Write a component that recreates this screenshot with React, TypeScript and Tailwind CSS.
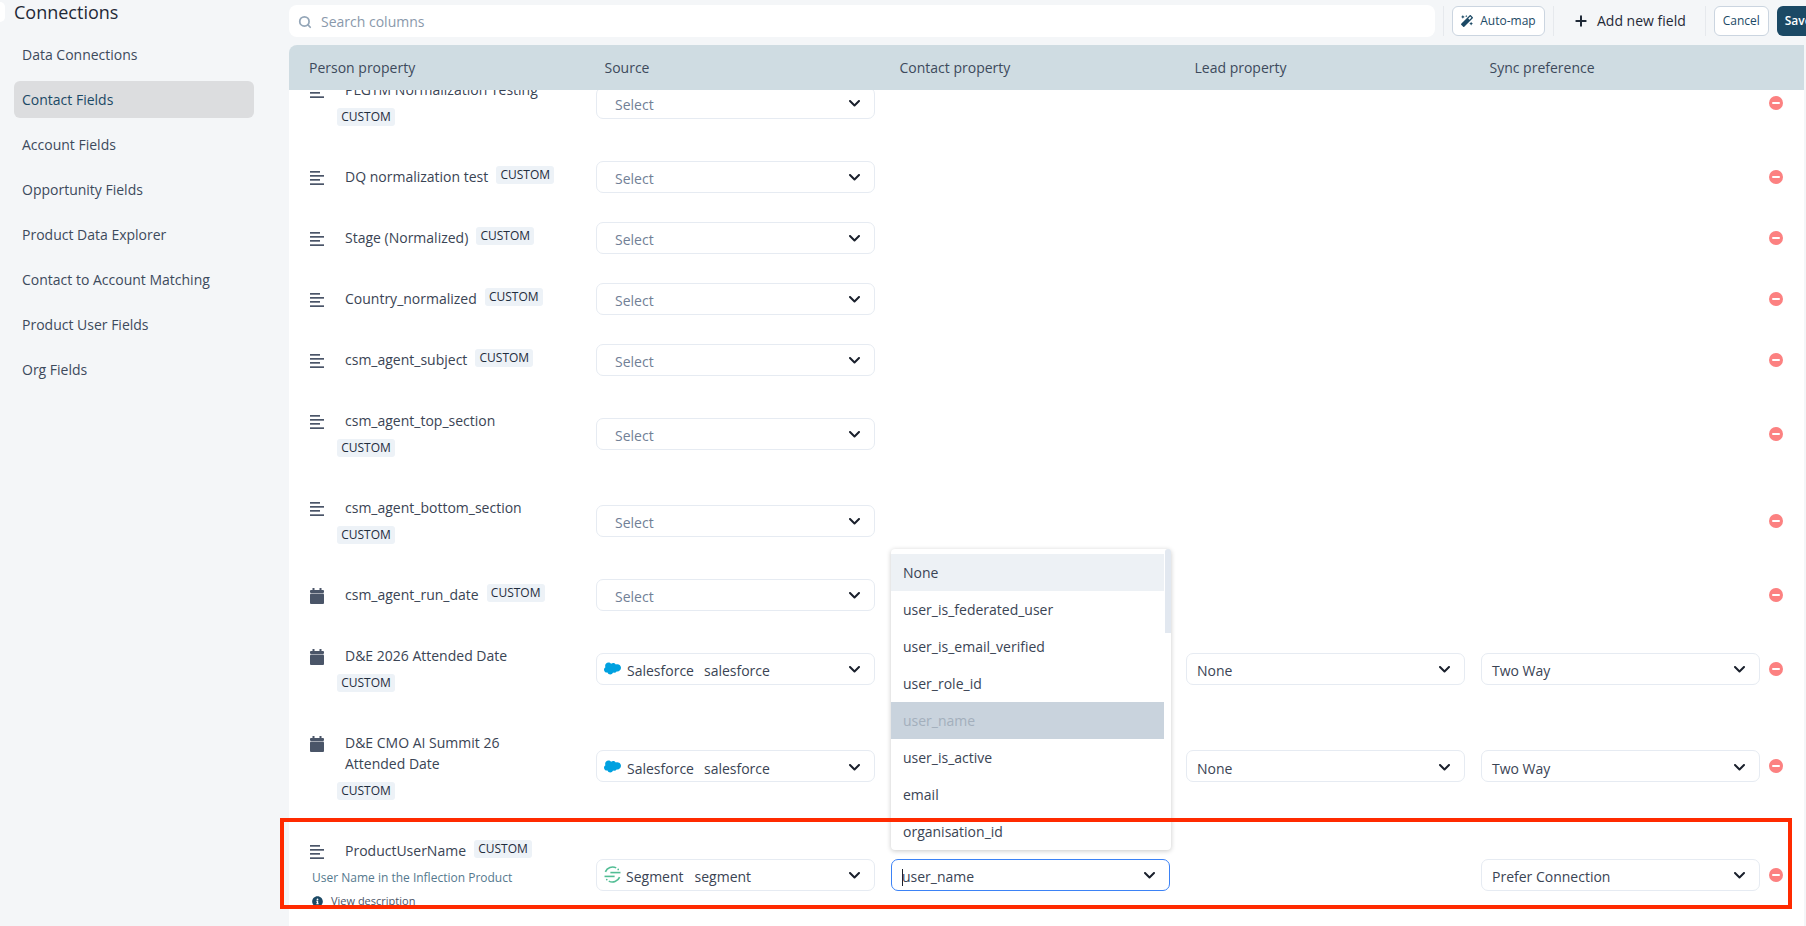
import React from 'react'
import { FaInfoCircle, FaMagic } from 'react-icons/fa'
import { SiSalesforce } from 'react-icons/si'
import { Plus, Search } from 'lucide-react'

type Row = {
  name: string
  icon: 'lines' | 'calendar'
  source: 'select' | 'salesforce' | 'segment'
  lead?: string
  sync?: string
  contact?: boolean
  extra?: boolean
}

const navItems = ['Data Connections', 'Contact Fields', 'Account Fields', 'Opportunity Fields', 'Product Data Explorer', 'Contact to Account Matching', 'Product User Fields', 'Org Fields']

const options = ['None', 'user_is_federated_user', 'user_is_email_verified', 'user_role_id', 'user_name', 'user_is_active', 'email', 'organisation_id']

const rows: Row[] = [
  { name: 'PLGTM Normalization Testing', icon: 'lines', source: 'select' },
  { name: 'DQ normalization test', icon: 'lines', source: 'select' },
  { name: 'Stage (Normalized)', icon: 'lines', source: 'select' },
  { name: 'Country_normalized', icon: 'lines', source: 'select' },
  { name: 'csm_agent_subject', icon: 'lines', source: 'select' },
  { name: 'csm_agent_top_section', icon: 'lines', source: 'select' },
  { name: 'csm_agent_bottom_section', icon: 'lines', source: 'select' },
  { name: 'csm_agent_run_date', icon: 'calendar', source: 'select' },
  { name: 'D&E 2026 Attended Date', icon: 'calendar', source: 'salesforce', lead: 'None', sync: 'Two Way' },
  { name: 'D&E CMO AI Summit 26 Attended Date', icon: 'calendar', source: 'salesforce', lead: 'None', sync: 'Two Way' },
  { name: 'ProductUserName', icon: 'lines', source: 'segment', sync: 'Prefer Connection', contact: true, extra: true },
]

const Chevron = () => (
  <svg width="11" height="7" viewBox="0 0 11 7" fill="none" className="shrink-0 mt-[2px]">
    <path d="M1 1l4.5 4.5L10 1" stroke="#1a202c" strokeWidth="2" strokeLinecap="round" strokeLinejoin="round" />
  </svg>
)

const LinesIcon = () => (
  <svg width="14" height="14" viewBox="0 0 14 14" className="shrink-0 mt-[5px] mr-[13px]" fill="#4a5568">
    <rect x="0" y="0" width="10" height="1.7" />
    <rect x="0" y="4" width="14" height="1.7" />
    <rect x="0" y="8" width="10" height="1.7" />
    <rect x="0" y="12.3" width="14" height="1.7" />
  </svg>
)

const CalendarIcon = () => (
  <svg width="14" height="16" viewBox="0 0 14 16" className="shrink-0 mt-[4px] mr-[13px]" fill="#4a5568">
    <rect x="2.5" y="0" width="2" height="3" />
    <rect x="9.5" y="0" width="2" height="3" />
    <rect x="0" y="2" width="14" height="3" rx="1" />
    <rect x="0" y="5.6" width="14" height="10.4" rx="1" />
  </svg>
)

const SegmentLogo = () => (
  <svg width="17" height="17" viewBox="0 0 16 16" fill="none" stroke="#52bd94" strokeWidth="1.5" className="shrink-0 mr-[5px]">
    <path d="M6 6.2h9.5" />
    <path d="M0.5 9.8H10" />
    <path d="M1.3 5.5A7.3 7.3 0 0 1 11.5 1.8" />
    <path d="M14.7 10.5A7.3 7.3 0 0 1 4.5 14.2" />
    <circle cx="13.4" cy="3.2" r="0.8" fill="#52bd94" stroke="none" />
    <circle cx="2.6" cy="12.8" r="0.8" fill="#52bd94" stroke="none" />
  </svg>
)

const MinusIcon = () => (
  <div className="w-[14px] h-[14px] rounded-full bg-[#fc8181] flex items-center justify-center shrink-0">
    <div className="w-[8px] h-[2px] rounded-sm bg-white" />
  </div>
)

const Select = ({ children, active, pad = 'pl-[10px]' }: { children?: React.ReactNode; active?: boolean; pad?: string }) => (
  <div className={`w-[279px] h-[32px] shrink-0 rounded-[7px] bg-white flex items-center justify-between pr-[14px] ${pad} ${active ? 'border-[1.5px] border-[#3b82f6]' : 'border-[1.5px] border-[#e6ebf2]'}`}>
    <div className="flex items-center text-sm text-[#3a4454] pt-[5px] whitespace-nowrap">{children}</div>
    <Chevron />
  </div>
)

const SourceCell = ({ source }: { source: Row['source'] }) => {
  if (source === 'select') {
    return <Select pad="pl-[18px]"><span className="text-[#718096]">Select</span></Select>
  }
  if (source === 'salesforce') {
    return (
      <Select pad="pl-[7px]">
        <SiSalesforce className="text-[17px] text-[#00a1e0] mr-[6px] -mt-[5px]" />
        Salesforce<span className="ml-[10px]">salesforce</span>
      </Select>
    )
  }
  return (
    <Select pad="pl-[7px]">
      <div className="-mt-[5px]"><SegmentLogo /></div>
      Segment<span className="ml-[11px]">segment</span>
    </Select>
  )
}

const FieldRow = ({ row }: { row: Row }) => (
  <div className="flex items-center pl-[21px]">
    <div className="w-[286px] shrink-0 pt-[18px] pb-[22px]">
      <div className="flex items-start">
        {row.icon === 'lines' ? <LinesIcon /> : <CalendarIcon />}
        <div className="w-[221px] flex flex-wrap items-start gap-y-2">
          <span className="px-2 text-sm leading-[21px] text-[#3a4454]">{row.name}</span>
          <span className="h-[18px] w-[58px] rounded-[3px] bg-[#edf2f7] text-xs font-medium leading-[18px] text-center text-[#1f2d3d]">CUSTOM</span>
        </div>
      </div>
      {row.extra && (
        <div className="pl-[2px]">
          <div className="mt-[8px] text-xs leading-[18px] text-[#55798e]">User Name in the Inflection Product</div>
          <div className="mt-[6px] flex items-center leading-[16px] text-[11px] text-[#4a5568]">
            <FaInfoCircle className="text-[11px] text-[#1b4965] mr-[8px]" />
            View description
          </div>
        </div>
      )}
    </div>
    <div className="flex items-center gap-4 pb-1">
      <SourceCell source={row.source} />
      {row.contact ? (
        <Select active>
          <span className="w-px h-[17px] bg-[#1a202c] -mr-px" />
          user_name
        </Select>
      ) : (
        <div className="w-[279px]" />
      )}
      {row.lead ? <Select>{row.lead}</Select> : <div className="w-[279px]" />}
      {row.sync ? <Select>{row.sync}</Select> : <div className="w-[279px]" />}
      <div className="-ml-[7px]"><MinusIcon /></div>
    </div>
  </div>
)

const App = () => {
  return (
    <div className="relative w-[1806px] h-[926px] overflow-hidden bg-[#f4f6f8] flex font-['Open_Sans',sans-serif]">
      {/* sidebar */}
      <div className="w-[289px] shrink-0">
        <div className="flex items-center h-[24px]">
          <div className="w-[5px] h-[20px] rounded-r-full bg-white mr-[9px]" />
          <span className="text-lg text-[#1f2937]">Connections</span>
        </div>
        <div className="mt-[12px] ml-[14px] w-[240px] flex flex-col gap-2">
          {navItems.map((item, i) => (
            <div key={item} className={`h-[37px] pl-2 flex items-center rounded-md text-sm ${i === 1 ? 'bg-[#dcdddf] text-[#1b4965]' : 'text-[#3d4a5c]'}`}>
              {item}
            </div>
          ))}
        </div>
      </div>

      {/* main */}
      <div className="w-[1515px] shrink-0 flex flex-col">
        <div className="h-[45px] shrink-0 flex items-start">
          <div className="mt-[5px] w-[1146px] h-[32px] shrink-0 rounded-lg bg-white flex items-center pl-[9px] pt-[1px] text-sm text-[#8a99ab]">
            <Search size={14} strokeWidth={3} className="text-[#94a6b8] mr-[9px]" />
            Search columns
          </div>
          <div className="ml-[8px] mt-[6px] w-px h-[30px] shrink-0 bg-[#e6e9ed]" />
          <div className="ml-[8px] mt-[6px] w-[93px] h-[30px] shrink-0 rounded-md border border-[#cbd5e0] bg-white flex items-center justify-center gap-[7px] text-xs text-[#1b4965]">
            <FaMagic className="text-[12px]" />
            Auto-map
          </div>
          <div className="ml-[8px] mt-[6px] w-px h-[30px] shrink-0 bg-[#e6e9ed]" />
          <div className="ml-[19px] mt-[6px] h-[30px] shrink-0 flex items-center whitespace-nowrap text-sm font-medium text-[#1f2937]">
            <Plus size={16} strokeWidth={3} className="mr-[8px]" />
            Add new field
          </div>
          <div className="ml-[19px] mt-[6px] w-px h-[30px] shrink-0 bg-[#e6e9ed]" />
          <div className="ml-[8px] mt-[6px] w-[55px] h-[30px] shrink-0 rounded-md border border-[#cbd5e0] bg-white flex items-center justify-center text-xs text-[#1b4965]">
            Cancel
          </div>
          <div className="ml-[8px] mt-[6px] w-[55px] h-[30px] shrink-0 rounded-md bg-[#1b4965] flex items-center pl-[8px] text-xs font-semibold text-white">
            Save
          </div>
        </div>

        <div className="h-[45px] shrink-0 rounded-tl-lg bg-[#cfdce2] flex items-center text-sm text-[#3d4a5c]">
          <div className="w-[315.5px] pl-[20px]">Person property</div>
          <div className="w-[295px]">Source</div>
          <div className="w-[295px]">Contact property</div>
          <div className="w-[295px]">Lead property</div>
          <div>Sync preference</div>
        </div>

        <div className="flex-1 bg-white overflow-hidden">
          <div className="-mt-[29px]">
            {rows.map((row) => (
              <FieldRow key={row.name} row={row} />
            ))}
          </div>
        </div>
      </div>

      {/* open dropdown */}
      <div className="absolute left-[891px] top-[549px] w-[280px] h-[301px] pt-[5px] bg-white rounded-sm shadow-[0_1px_5px_rgba(0,0,0,0.22)] z-10">
        <div className="absolute right-0 top-0 w-[6.5px] h-[84px] bg-[#e2e8f0] rounded-t-sm" />
        {options.map((opt) => (
          <div
            key={opt}
            className={`w-[273px] h-[37px] pl-[12px] flex items-center text-sm ${opt === 'None' ? 'bg-[#edf1f5] text-[#3a4454]' : opt === 'user_name' ? 'bg-[#c9d3dd] text-[#a3afbc]' : 'text-[#3a4454]'}`}
          >
            {opt}
          </div>
        ))}
      </div>

      {/* annotation */}
      <div className="absolute left-[280px] top-[818px] w-[1512px] h-[91px] border-4 border-[#ff2a00] z-20 pointer-events-none" />
    </div>
  )
}

export default App
